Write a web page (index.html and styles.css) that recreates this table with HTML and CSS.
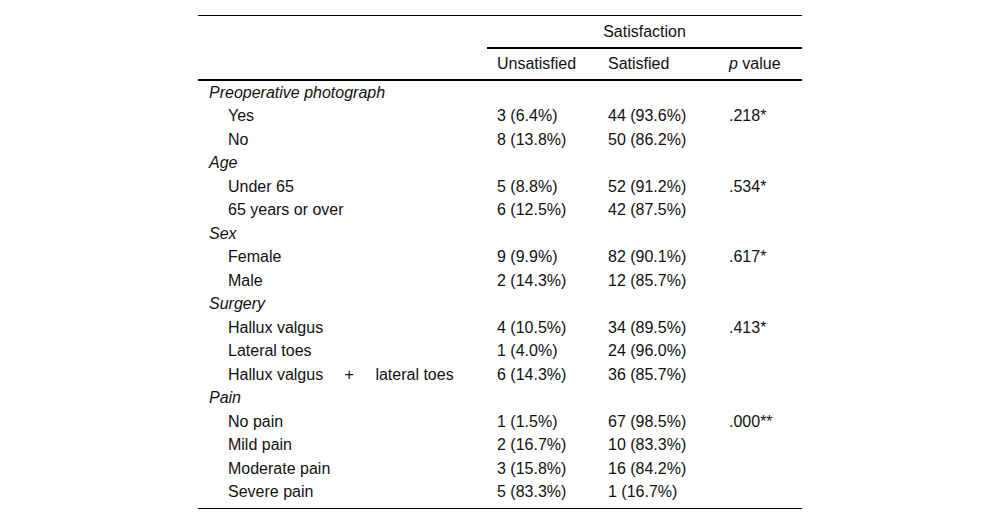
FILE: index.html
```html
<!DOCTYPE html>
<html lang="en">
<head>
<meta charset="utf-8">
<title>Satisfaction table</title>
<link rel="stylesheet" href="styles.css">
</head>
<body>
<table class="data">
  <colgroup>
    <col class="c-label">
    <col class="c-uns">
    <col class="c-sat">
    <col class="c-p">
  </colgroup>
  <thead>
    <tr class="h1">
      <td class="blank"></td>
      <th colspan="3" class="group">Satisfaction</th>
    </tr>
    <tr class="h2">
      <th class="blank"></th>
      <th>Unsatisfied</th>
      <th>Satisfied</th>
      <th><i>p</i> value</th>
    </tr>
  </thead>
  <tbody>
    <tr class="cat"><td colspan="4">Preoperative photograph</td></tr>
    <tr><td class="sub">Yes</td><td>3 (6.4%)</td><td>44 (93.6%)</td><td>.218*</td></tr>
    <tr><td class="sub">No</td><td>8 (13.8%)</td><td>50 (86.2%)</td><td></td></tr>
    <tr class="cat"><td colspan="4">Age</td></tr>
    <tr><td class="sub">Under 65</td><td>5 (8.8%)</td><td>52 (91.2%)</td><td>.534*</td></tr>
    <tr><td class="sub">65 years or over</td><td>6 (12.5%)</td><td>42 (87.5%)</td><td></td></tr>
    <tr class="cat"><td colspan="4">Sex</td></tr>
    <tr><td class="sub">Female</td><td>9 (9.9%)</td><td>82 (90.1%)</td><td>.617*</td></tr>
    <tr><td class="sub">Male</td><td>2 (14.3%)</td><td>12 (85.7%)</td><td></td></tr>
    <tr class="cat"><td colspan="4">Surgery</td></tr>
    <tr><td class="sub">Hallux valgus</td><td>4 (10.5%)</td><td>34 (89.5%)</td><td>.413*</td></tr>
    <tr><td class="sub">Lateral toes</td><td>1 (4.0%)</td><td>24 (96.0%)</td><td></td></tr>
    <tr><td class="sub">Hallux valgus <span class="plus">+</span> lateral toes</td><td>6 (14.3%)</td><td>36 (85.7%)</td><td></td></tr>
    <tr class="cat"><td colspan="4">Pain</td></tr>
    <tr><td class="sub">No pain</td><td>1 (1.5%)</td><td>67 (98.5%)</td><td>.000**</td></tr>
    <tr><td class="sub">Mild pain</td><td>2 (16.7%)</td><td>10 (83.3%)</td><td></td></tr>
    <tr><td class="sub">Moderate pain</td><td>3 (15.8%)</td><td>16 (84.2%)</td><td></td></tr>
    <tr class="last"><td class="sub">Severe pain</td><td>5 (83.3%)</td><td>1 (16.7%)</td><td></td></tr>
  </tbody>
</table>
</body>
</html>
```

FILE: styles.css
```css
html, body {
  margin: 0;
  padding: 0;
  background: #fff;
}

body {
  font-family: "Liberation Sans", Arial, sans-serif;
  font-size: 16px;
  color: #111;
}

.data {
  width: 604px;
  margin: 15px auto 0;
  border-collapse: separate;
  border-spacing: 0;
  border-top: 1px solid #000;
  border-bottom: 1px solid #000;
  table-layout: fixed;
}

.c-label { width: 289px; }
.c-uns { width: 111px; }
.c-sat { width: 121px; }
.c-p { width: 83px; }

.data th,
.data td {
  padding: 0 10px;
  text-align: left;
  font-weight: normal;
  white-space: nowrap;
  vertical-align: middle;
}

.h1 th,
.h1 td {
  height: 31px;
  line-height: 31px;
}

.h1 .group {
  text-align: center;
  border-bottom: 2px solid #000;
}

.h2 th {
  height: 30px;
  line-height: 30px;
  border-bottom: 2px solid #000;
}

.data tbody td {
  height: 23.47px;
  line-height: 23.47px;
}

.cat td {
  font-style: italic;
  padding-left: 11px;
}

.data tbody td.sub {
  padding-left: 30px;
}

.plus {
  margin: 0 17px;
}

.last td {
  padding-bottom: 5px;
}
```
